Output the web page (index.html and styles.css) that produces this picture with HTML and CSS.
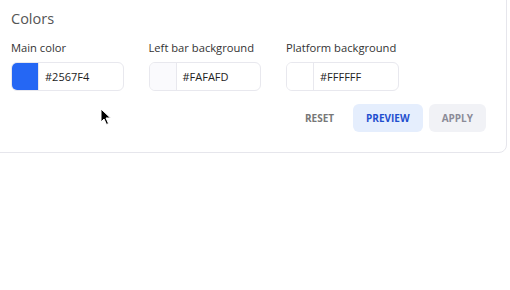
FILE: index.html
```html
<!DOCTYPE html>
<html>
<head>
<meta charset="utf-8">
<link rel="stylesheet" href="styles.css">
</head>
<body>
<div class="card">
  <h2 class="title">Colors</h2>
  <div class="fields">
    <div class="field">
      <div class="label">Main color</div>
      <div class="input"><span class="swatch" style="background:#2567F4"></span><span class="value">#2567F4</span></div>
    </div>
    <div class="field">
      <div class="label">Left bar background</div>
      <div class="input"><span class="swatch" style="background:#FAFAFD"></span><span class="value">#FAFAFD</span></div>
    </div>
    <div class="field">
      <div class="label">Platform background</div>
      <div class="input"><span class="swatch" style="background:#FFFFFF"></span><span class="value">#FFFFFF</span></div>
    </div>
  </div>
  <div class="actions">
    <button class="btn btn-reset">RESET</button>
    <button class="btn btn-preview">PREVIEW</button>
    <button class="btn btn-apply">APPLY</button>
  </div>
</div>
<svg class="cursor" width="12" height="18" viewBox="0 0 12 18"><path d="M1 1 L1 14 L4 11 L6.5 16.5 L8.5 15.5 L6 10 L10.5 10 Z" fill="#000" stroke="#fff" stroke-width="1"/></svg>
</body>
</html>
```
FILE: styles.css
```css
html, body { margin: 0; padding: 0; background: #fff; }
body {
  font-family: "Open Sans", "Noto Sans", sans-serif;
  position: relative;
  width: 510px;
  height: 290px;
  overflow: hidden;
}
.card {
  margin: -10px 0 0 -1px;
  width: 508px;
  box-sizing: border-box;
  border: 1px solid #e6e6ec;
  border-radius: 0 0 8px 0;
  padding: 18px 20px 20px 11px;
  background: #fff;
}
.title {
  margin: 0;
  font-size: 14.5px;
  font-weight: 400;
  color: #555;
  line-height: 20px;
}
.fields {
  display: flex;
  gap: 25px;
  margin-top: 11px;
}
.field { width: 112.5px; }
.label {
  font-size: 11.2px;
  color: #333;
  line-height: 16px;
  margin-bottom: 6px;
  white-space: nowrap;
}
.input {
  display: flex;
  align-items: stretch;
  height: 29px;
  box-sizing: border-box;
  border: 1px solid #e8e8ee;
  border-radius: 6px;
  overflow: hidden;
}
.swatch {
  width: 26px;
  border-right: 1px solid #e8e8ee;
}
.value {
  font-size: 11px;
  color: #222;
  line-height: 27px;
  padding-left: 6px;
}
.actions {
  display: flex;
  justify-content: flex-end;
  gap: 6px;
  margin-top: 13px;
}
.btn {
  font-family: "Open Sans", sans-serif;
  font-weight: 700;
  font-size: 10px;
  height: 28px;
  border: none;
  border-radius: 6px;
  padding: 0 13px;
  background: transparent;
  cursor: pointer;
}
.btn-reset { color: #777; }
.btn-preview { background: #e5eefd; color: #1f4fcf; }
.btn-apply { background: #f1f2f6; color: #8b8b98; }
.cursor {
  position: absolute;
  left: 100px;
  top: 108px;
}
```
